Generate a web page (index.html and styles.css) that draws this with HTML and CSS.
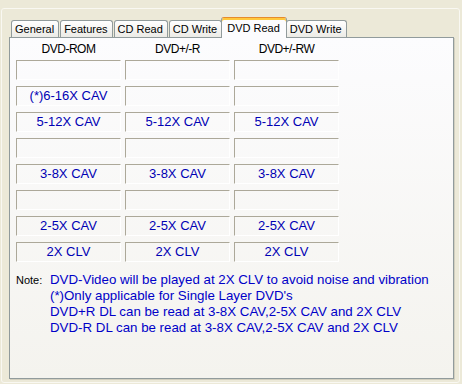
FILE: index.html
```html
<!DOCTYPE html>
<html lang="en">
<head>
    <meta charset="UTF-8">
    <title>DVD Read</title>
    <link rel="stylesheet" href="styles.css">
</head>
<body>
    <div class="frame">
        <div class="tabs">
            <div class="tab">General</div>
            <div class="tab">Features</div>
            <div class="tab">CD Read</div>
            <div class="tab">CD Write</div>
            <div class="tab active">DVD Read</div>
            <div class="tab">DVD Write</div>
        </div>
        <div class="panel">
            <div class="grid heads">
                <div>DVD-ROM</div>
                <div>DVD+/-R</div>
                <div>DVD+/-RW</div>
            </div>
            <div class="grid cells">
                <div class="cell"></div><div class="cell"></div><div class="cell"></div>
                <div class="cell">(*)6-16X CAV</div><div class="cell"></div><div class="cell"></div>
                <div class="cell">5-12X CAV</div><div class="cell">5-12X CAV</div><div class="cell">5-12X CAV</div>
                <div class="cell"></div><div class="cell"></div><div class="cell"></div>
                <div class="cell">3-8X CAV</div><div class="cell">3-8X CAV</div><div class="cell">3-8X CAV</div>
                <div class="cell"></div><div class="cell"></div><div class="cell"></div>
                <div class="cell">2-5X CAV</div><div class="cell">2-5X CAV</div><div class="cell">2-5X CAV</div>
                <div class="cell">2X CLV</div><div class="cell">2X CLV</div><div class="cell">2X CLV</div>
            </div>
            <div class="note">
                <div class="note-label">Note:</div>
                <div class="note-text">
                    <div>DVD-Video will be played at 2X CLV to avoid noise and vibration</div>
                    <div>(*)Only applicable for Single Layer DVD's</div>
                    <div>DVD+R DL can be read at 3-8X CAV,2-5X CAV and 2X CLV</div>
                    <div>DVD-R DL can be read at 3-8X CAV,2-5X CAV and 2X CLV</div>
                </div>
            </div>
        </div>
    </div>
</body>
</html>
```
FILE: styles.css
```css
html, body {
    margin: 0;
    width: 462px;
    height: 384px;
    overflow: hidden;
    background: #ece9d8;
    font-family: "Liberation Sans", Arial, sans-serif;
}

.frame {
    box-sizing: border-box;
    width: 459px;
    height: 375px;
    margin: 8px 0 0 1px;
    padding: 8px 0 0 7px;
    border: 1px solid #f9f8f2;
    border-radius: 3px;
}

/* tab strip */
.tabs {
    display: flex;
    align-items: flex-end;
    height: 20px;
    padding-left: 2px;
}

.tab {
    box-sizing: border-box;
    height: 17px;
    margin-right: 1px;
    padding: 1px 4px 0 3px;
    border: 1px solid #919b9c;
    border-bottom: none;
    border-radius: 3px 3px 0 0;
    background: linear-gradient(#ffffff, #ecebe6);
    font-size: 11px;
    line-height: 15px;
    color: #000;
    white-space: nowrap;
}

.tab.active {
    position: relative;
    z-index: 1;
    height: 21px;
    margin: 0 -1px -1px -2px;
    padding: 1px 6px 0 5px;
    border-top: 1px solid #e68b2c;
    background: #fcfcfe;
    box-shadow: inset 0 2px 0 #ffc83c;
    line-height: 18px;
}

/* page body */
.panel {
    box-sizing: border-box;
    width: 445px;
    height: 342px;
    padding: 4px 0 0 6px;
    border: 1px solid #919b9c;
    background: linear-gradient(#fcfcfe, #f4f3ee);
    box-shadow: 1px 1px 0 #d2cfbf;
}

.grid {
    display: grid;
    grid-template-columns: repeat(3, 105px);
    column-gap: 4px;
}

.heads {
    margin-bottom: 4px;
    font-size: 12px;
    letter-spacing: -0.5px;
    line-height: 14px;
    text-align: center;
    color: #000;
}

.cells {
    grid-auto-rows: 20px;
    row-gap: 6px;
}

.cell {
    box-sizing: border-box;
    border-top: 1px solid #aca899;
    border-left: 1px solid #aca899;
    border-right: 1px solid #fff;
    border-bottom: 1px solid #fff;
    font-size: 13px;
    line-height: 18px;
    text-align: center;
    color: #0000b4;
}

.note {
    display: flex;
    margin-top: 10px;
    line-height: 16px;
}

.note-label {
    width: 34px;
    font-size: 11px;
    color: #000;
}

.note-text {
    font-size: 13.3px;
    color: #0000c8;
}
```
